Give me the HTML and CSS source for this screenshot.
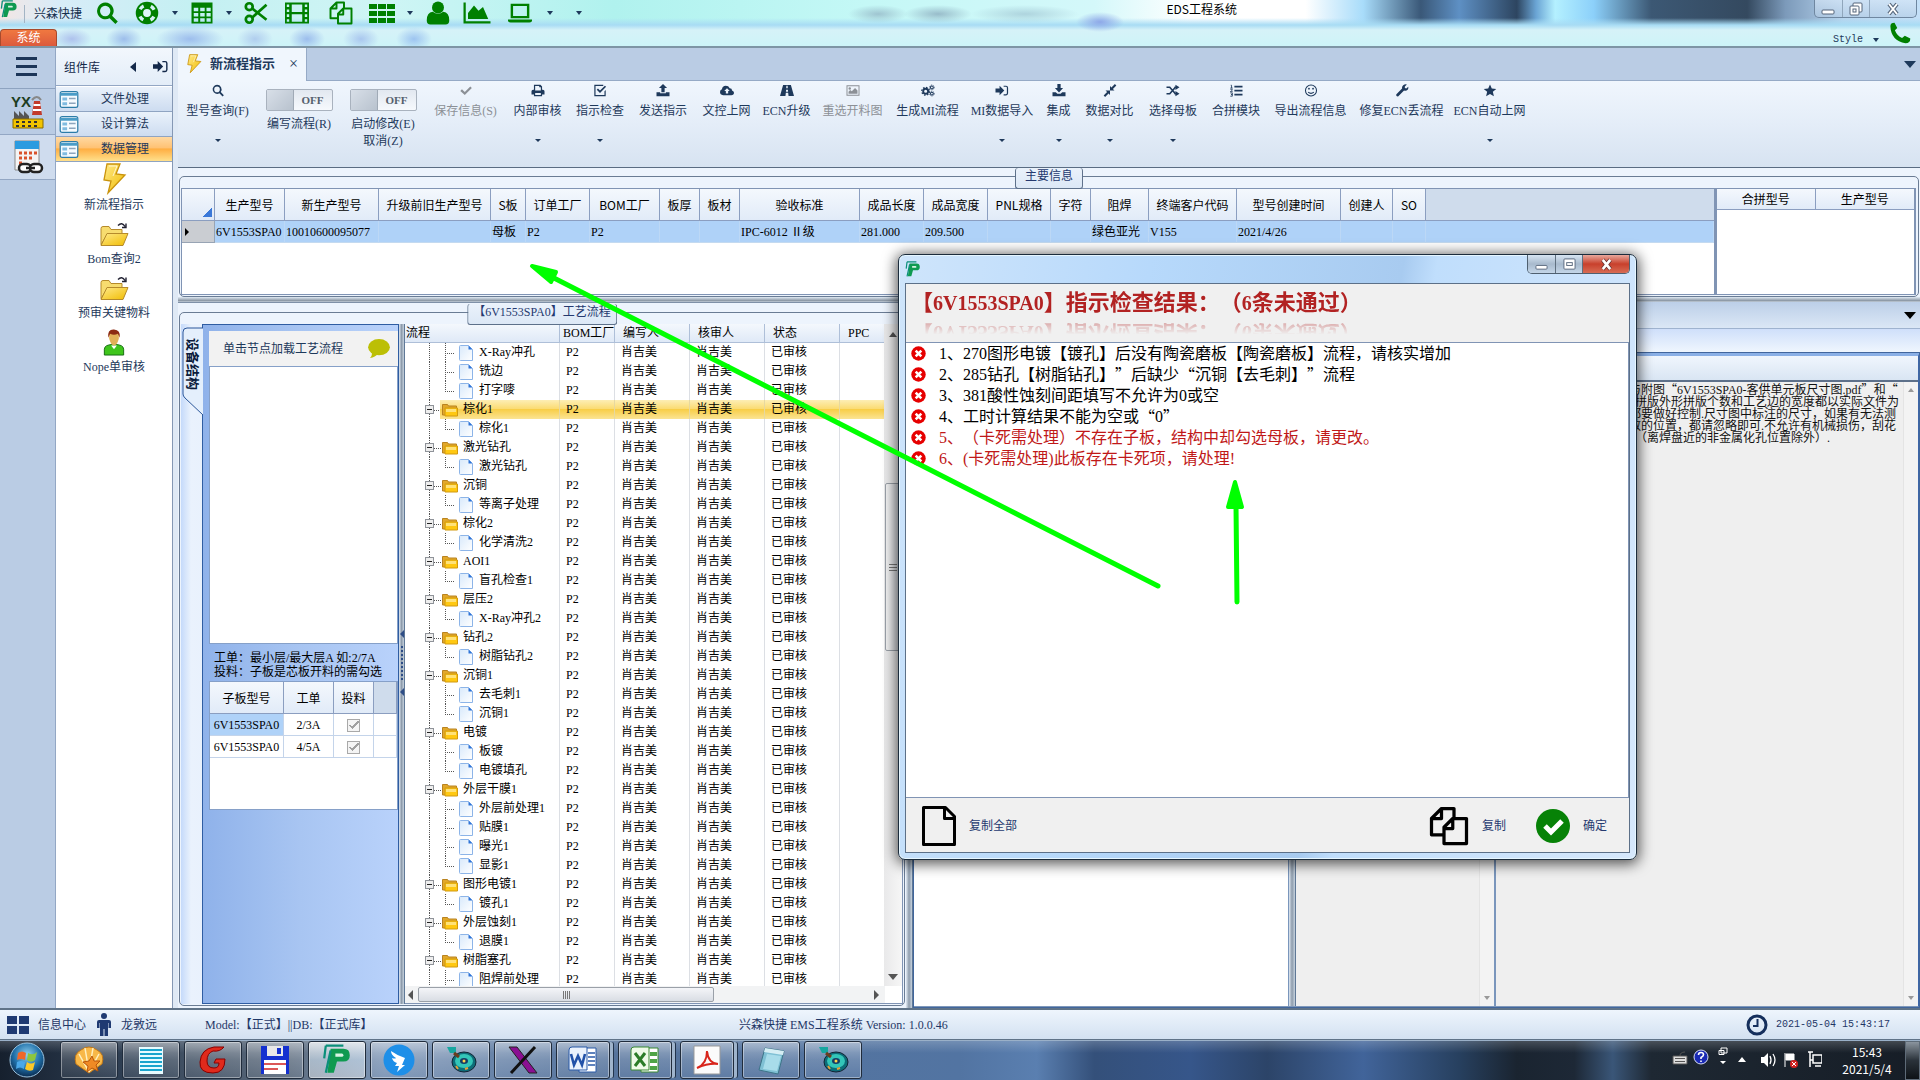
FILE: index.html
```html
<!DOCTYPE html>
<html lang="zh-CN">
<head>
<meta charset="utf-8">
<title>EDS工程系统</title>
<link rel="stylesheet" href="styles.css">
</head>
<body>
<svg class="defs" width="0" height="0" aria-hidden="true">
  <defs>
    <linearGradient id="gold" x1="0" y1="0" x2="1" y2="1"><stop offset="0" stop-color="#ffe98a"/><stop offset="1" stop-color="#f0bc00"/></linearGradient>
    <linearGradient id="pagefill" x1="0" y1="0" x2="1" y2="1"><stop offset="0" stop-color="#d8e9fb"/><stop offset="1" stop-color="#fff"/></linearGradient>
    <radialGradient id="orb" cx=".5" cy=".35" r=".65"><stop offset="0" stop-color="#8fd0f0"/><stop offset=".6" stop-color="#1f6fa8"/><stop offset="1" stop-color="#0a2c50"/></radialGradient>
  </defs>
  <symbol id="logo" viewBox="0 0 18 20"><path d="M5 3h8q4 0 4 4t-4 4H9l-2 7H3z" fill="#0f9a50"/><path d="M8 6h4q1 0 1 1t-1 1H8z" fill="#d8f4e4"/><path d="M2 1h11M2 1L1 9M5 4L2 18" stroke="#0b8f7a" stroke-width="1.4" fill="none"/></symbol>
  <symbol id="search" viewBox="0 0 16 16"><path d="M6.8 1a5.6 5.6 0 0 1 4.6 8.8l3.8 3.9-1.6 1.6-3.9-3.8A5.6 5.6 0 1 1 6.800 1zm0 2.200a3.400 3.400 0 1 0 0 6.900 3.400 3.400 0 0 0 0-6.900z"/></symbol>
  <symbol id="buoy" viewBox="0 0 16 16"><circle cx="8" cy="8" r="7.500"/><circle cx="8" cy="8" r="5.200" fill="none" stroke="#d6f2f6" stroke-width="2.200" stroke-dasharray="3.200 4.970" stroke-dashoffset="-2.500"/><circle cx="8" cy="8" r="2.600" fill="#dff6fa"/></symbol>
  <symbol id="grid" viewBox="0 0 16 16"><path fill-rule="evenodd" d="M1 1h14v14H1zM2.500 4.500v2.300h3V4.500zm4.300 0v2.300h3V4.500zm4.200 0v2.300h2.800V4.500zM2.500 8v2.300h3V8zm4.300 0v2.300h3V8zM11 8v2.300h2.800V8zm-8.500 3.500v2.300h3v-2.300zm4.300 0v2.300h3v-2.300zm4.200 0v2.300h2.800v-2.300z"/></symbol>
  <symbol id="cut" viewBox="0 0 16 16"><g fill="none" stroke="currentColor" stroke-width="1.800"><circle cx="3.500" cy="3.800" r="2.300"/><circle cx="3.500" cy="12.200" r="2.300"/><path d="M5.500 5l9.500 7.500M5.500 11L15 2.500"/></g></symbol>
  <symbol id="film" viewBox="0 0 16 16"><path fill-rule="evenodd" d="M0 1h16v14H0zM1.200 2.300v1.700h1.600V2.300zm0 3.300v1.700h1.600V5.600zm0 3.300v1.700h1.600V8.900zm0 3.200v1.700h1.600v-1.700zM4.500 2.300v5h7v-5zm0 6.500v5h7v-5zM13.200 2.300v1.700h1.600V2.300zm0 3.300v1.700h1.600V5.600zm0 3.300v1.700h1.600V8.900zm0 3.200v1.700h1.600v-1.700z"/></symbol>
  <symbol id="copy" viewBox="0 0 32 32"><g fill="none" stroke="currentColor" stroke-width="2.600" stroke-linejoin="round"><path d="M12 23H2V10l8-8h10v8M10 2v8H2"/><path d="M12 17l7-7h11v20H12zM19 10v8h-7"/></g></symbol>
  <symbol id="th" viewBox="0 0 26 19"><path d="M0 0h8v5H0zM9 0h8v5H9zM18 0h8v5h-8zM0 7h8v5H0zM9 7h8v5H9zM18 7h8v5h-8zM0 14h8v5H0zM9 14h8v5H9zM18 14h8v5h-8z"/></symbol>
  <symbol id="user" viewBox="0 0 16 16"><circle cx="8" cy="4.300" r="4"/><path d="M.500 13q0-5.500 4-5.800 3.500 2.500 7 0 4 .3 4 5.800 0 2.600-2.500 2.600H3Q.500 15.600.500 13z"/></symbol>
  <symbol id="chart" viewBox="0 0 18 16"><path d="M0 1h1.500v12.500H18V15H0zM3 12V8l4-5 3 3.500L13 4l3.500 8z"/></symbol>
  <symbol id="laptop" viewBox="0 0 18 16"><path fill-rule="evenodd" d="M2 1h14v11H2zm1.800 1.800v7.400h10.400V2.800zM0 12.800h18v1.400q-1 1-2 1H2q-1 0-2-1z"/></symbol>
  <symbol id="phone" viewBox="0 0 16 16"><path d="M1 3Q1 .5 4 .5l2 3.800L4.300 6q1.500 4 5.200 5.700l2-1.700 4 2q0 3.500-3.500 3.500Q1.500 13.500 1 3z"/></symbol>
  <symbol id="signin" viewBox="0 0 16 16"><path d="M0 5.500h5V2.200L10.800 8 5 13.800v-3.300H0zM10 2h3q2.500 0 2.500 2.500v7Q15.500 14 13 14h-3v-1.500h3q1 0 1-1v-7q0-1-1-1h-3z"/></symbol>
  <symbol id="bolt" viewBox="0 0 24 32"><path d="M5 1h13l-4 10 9 1L6 30l3-12-7-1z" fill="url(#gold)" stroke="#c9930c" stroke-width="1.300"/><path d="M7 3h8l-4 10" fill="none" stroke="#fff" opacity=".7"/></symbol>
  <symbol id="openfolder" viewBox="0 0 30 26"><path d="M2 23V7q0-2 2-2h6l2 3h11v4H9z" fill="#f7dc6f" stroke="#b58a2b"/><path d="M2 24L8 12h21l-5 12z" fill="url(#gold)" stroke="#b58a2b"/><path d="M19 4q4-4 7 1m1-3v4h-4" fill="none" stroke="#223" stroke-width="1.400"/></symbol>
  <symbol id="person" viewBox="0 0 22 28"><path d="M1 27v-6q0-5 10-5t10 5v6z" fill="#3fc51c" stroke="#146b10"/><path d="M8 17l3 4 3-4z" fill="#fff"/><path d="M6 4q5-5 10 0v6q-2 7-5 7t-5-7z" fill="#e1b158"/><path d="M5 9Q4 0 11 .500T17 9l-2-4Q11 7 7 5z" fill="#8c2a12"/></symbol>
  <symbol id="form" viewBox="0 0 20 18"><rect x=".700" y=".700" width="18.600" height="16.600" rx="2" fill="#f5fbff" stroke="#2c7ca8" stroke-width="1.300"/><path d="M1 2h18v3H1z" fill="#4a9cc7"/><path d="M3 7h5v3H3zM3 12h5v3H3z" fill="#7fbbe0"/><path d="M10 8h7M10 13h7" stroke="#8da5bd" stroke-width="1.500"/></symbol>
  <symbol id="check" viewBox="0 0 16 16"><path d="M1 8.500L3 6.500l3.500 3.300L13.300 3l1.900 2-8.700 8.600z"/></symbol>
  <symbol id="print" viewBox="0 0 16 16"><path fill-rule="evenodd" d="M3 1h8l2 2v4h1q2 0 2 2v4h-3v2H3v-2H0V9q0-2 2-2h1zm1.500 1.500V8h7V4H9.500V2.500zM4.500 11v2.500h7V11z"/></symbol>
  <symbol id="checkbox" viewBox="0 0 16 16"><path fill-rule="evenodd" d="M2 1h10v1.500H2.500v11h11V9L15 7.500V15H1V1zM4 7l1.500-1.500L8 8l6-6 1.500 1.500L8 11z"/></symbol>
  <symbol id="upload" viewBox="0 0 16 16"><path d="M8 0l5 5H10v5H6V5H3zM0 10h4.500v1.500h7V10H16v5H0z"/></symbol>
  <symbol id="cloud" viewBox="0 0 18 16"><path fill-rule="evenodd" d="M4 14Q0 13.500 0 10q0-2.500 2.500-3.500Q3 2 7.500 2 11 2 12.500 5q3 0 3 3 2.500 1 2.500 3 0 3-3.500 3zM9 5L5.500 8.500h2V12h3V8.500h2z"/></symbol>
  <symbol id="road" viewBox="0 0 18 16"><path fill-rule="evenodd" d="M4 1h10l4 14h-7l-.5-4h-3L7 15H0zm4.200 1L8 5h2l-.2-3zM7.800 7l-.2 2.500h2.800L10.200 7z"/></symbol>
  <symbol id="image" viewBox="0 0 16 16"><path fill-rule="evenodd" d="M0 1.500h16v13H0zM1.200 2.800v10.400h13.600V2.800z"/><circle cx="4" cy="5.500" r="1.500"/><path d="M2.500 12V9.500l2-2 2 1.500L10.500 5l3 3v4z"/></symbol>
  <symbol id="cogs" viewBox="0 0 18 16"><g fill="none" stroke="currentColor"><circle cx="6" cy="9" r="3.200" stroke-width="2.400"/><circle cx="6" cy="9" r="5" stroke-width="1.600" stroke-dasharray="2 1.900"/><circle cx="14" cy="4" r="1.800" stroke-width="1.300"/><circle cx="14" cy="4" r="3" stroke-dasharray="1.300 1"/><circle cx="14" cy="12" r="1.800" stroke-width="1.300"/><circle cx="14" cy="12" r="3" stroke-dasharray="1.300 1"/></g></symbol>
  <symbol id="download" viewBox="0 0 16 16"><path d="M6 0h4v5h3l-5 5.500L3 5h3zM0 10h4l2 2h4l2-2h4v5H0z"/></symbol>
  <symbol id="compress" viewBox="0 0 16 16"><path d="M8 8V2.500l1.800 1.800L14 0l1.800 1.800-4.200 4.300L13.500 8zM8 8v5.500l-1.800-1.800L2 16 .200 14.200l4.200-4.300L2.500 8z"/></symbol>
  <symbol id="shuffle" viewBox="0 0 16 16"><path d="M0 4h4l7 8M0 12h4l7-8" fill="none" stroke="currentColor" stroke-width="2"/><path d="M11 1l5 3-5 3.500zM11 8.500l5 3.500-5 3z"/><path d="M10 4h2M10 12h2" stroke="currentColor" stroke-width="2"/></symbol>
  <symbol id="listol" viewBox="0 0 16 16"><path d="M6 2h10v2.200H6zM6 7h10v2.200H6zM6 12h10v2.200H6z"/><path d="M1.500 1.500h1V5M1 5h3M1 6.500h2.300v1.300L1 9.500h3M1 11h2.500v2H2h1.500v2H1" fill="none" stroke="currentColor"/></symbol>
  <symbol id="smile" viewBox="0 0 16 16"><g fill="none" stroke="currentColor" stroke-width="1.300"><circle cx="8" cy="8" r="6.800"/><path d="M4.500 10q3.500 3 7 0"/></g><circle cx="5.500" cy="5.800" r="1.100"/><circle cx="10.500" cy="5.800" r="1.100"/></symbol>
  <symbol id="wrench" viewBox="0 0 16 16"><path d="M11 0.500q1.500-.5 3 0L11.500 3v1.800l1.800.7 2.400-2.200q.6 2-.7 3.700-2 2-4.500 1l-7 7q-1 .7-2.200-.2-.9-1.200-.2-2.200l7-7Q7.500 2 11 .500z"/></symbol>
  <symbol id="star" viewBox="0 0 16 16"><path d="M8 .500l2.200 5 5.500.500-4.200 3.600 1.300 5.400L8 12.200 3.200 15l1.300-5.400L.300 6l5.500-.5z"/></symbol>
  <symbol id="treefolder" viewBox="0 0 16 14"><path d="M.500 12V1.500h5l1 1.500h8v9z" fill="#e2a82a" stroke="#b98320"/><path d="M3 13V5h12.500v8z" fill="#ffc811" stroke="#d29a10"/><path d="M4 6h10v3H4z" fill="#ffe27a"/></symbol>
  <symbol id="page" viewBox="0 0 14 16"><path d="M1.500.500h8l4 4v11h-12q-1 0-1-1v-13q0-1 1-1z" fill="url(#pagefill)" stroke="#8cb4e8"/><path d="M9.500.500v4h4z" fill="#2f74d8"/></symbol>
  <symbol id="error" viewBox="0 0 16 16"><circle cx="8" cy="8" r="7.700" fill="#e60000"/><path d="M5 5l6 6M11 5l-6 6" stroke="#fff" stroke-width="2.800"/></symbol>
  <symbol id="bigpage" viewBox="0 0 34 40"><path d="M1.500 1.500h22l9 9v28h-31zM22.500 2v10.500h10" fill="none" stroke="currentColor" stroke-width="3" stroke-linejoin="round"/></symbol>
  <symbol id="ok" viewBox="0 0 34 34"><circle cx="17" cy="17" r="17" fill="#078207"/><path d="M9 17l6 6 11-11" fill="none" stroke="#fff" stroke-width="5"/></symbol>
</svg>

<header class="titlebar">
  <div class="title-row">
    <svg class="app-logo"><use href="#logo"/></svg>
    <span class="brand">兴森快捷</span>
    <div class="quick">
      <button aria-label="查询"><svg class="q"><use href="#search"/></svg></button>
      <button aria-label="帮助"><svg class="q wide"><use href="#buoy"/></svg></button>
      <button aria-label="更多帮助"><i class="caret"></i></button>
      <button aria-label="表格"><svg class="q"><use href="#grid"/></svg></button>
      <button aria-label="更多表格"><i class="caret"></i></button>
      <button aria-label="剪切"><svg class="q"><use href="#cut"/></svg></button>
      <button aria-label="胶片"><svg class="q wide"><use href="#film"/></svg></button>
      <button aria-label="复制"><svg class="q wide"><use href="#copy"/></svg></button>
      <button aria-label="列表"><svg class="q flat"><use href="#th"/></svg></button>
      <button aria-label="更多列表"><i class="caret"></i></button>
      <button aria-label="用户"><svg class="q"><use href="#user"/></svg></button>
      <button aria-label="图表"><svg class="q wide"><use href="#chart"/></svg></button>
      <button aria-label="电脑"><svg class="q"><use href="#laptop"/></svg></button>
      <button aria-label="更多电脑"><i class="caret"></i></button>
      <button aria-label="自定义"><i class="caret more"></i></button>
    </div>
    <h1>EDS工程系统</h1>
    <div class="winctl">
      <button aria-label="最小化"><svg viewBox="0 0 16 14"><rect x="2" y="8" width="12" height="4" rx="1" fill="#fff" stroke="#55657a"/></svg></button>
      <button aria-label="还原"><svg viewBox="0 0 16 14"><rect x="5" y="1" width="9" height="9" rx="1" fill="#fff" stroke="#55657a"/><rect x="2" y="4" width="9" height="9" rx="1" fill="#fff" stroke="#55657a"/><rect x="5" y="7" width="3" height="3" fill="none" stroke="#55657a"/></svg></button>
      <button aria-label="关闭"><svg viewBox="0 0 16 14"><path d="M4 2l8 10M12 2L4 12" stroke="#55657a" stroke-width="4"/><path d="M4 2l8 10M12 2L4 12" stroke="#fff" stroke-width="2"/></svg></button>
    </div>
  </div>
  <div class="ribbon-row">
    <button class="system">系统</button>
    <button class="style-btn">Style <i class="caret"></i></button>
    <svg class="phone"><use href="#phone"/></svg>
  </div>
</header>

<div class="workspace">
  <nav class="rail">
    <button class="burger" aria-label="菜单"><i></i><i></i><i></i></button>
    <button class="rail-btn" aria-label="YX">
      <svg viewBox="0 0 32 34"><path d="M20 20l2-14h6l2 14z" fill="#c23b2c"/><path d="M21.500 10h7M21 15h8.500" stroke="#fff" stroke-width="2"/><path d="M20 5q5-6 9 0" fill="none" stroke="#888" stroke-width="2"/><path d="M2 32V16l5 5v-5l5 5v-5l5 5v11z" fill="#555"/><path d="M1 24h30v9H1z" fill="#f2c400" stroke="#8a6c00"/><path d="M4 27h3M10 27h3M16 27h3M22 27h3M4 31h3M10 31h3M16 31h3M22 31h3" stroke="#333" stroke-width="2"/></svg>
      <span>YX</span>
    </button>
    <button class="rail-btn picked" aria-label="计算">
      <svg viewBox="0 0 32 34"><path d="M3 1h24v29H3z" fill="#f4f4f4" stroke="#888"/><path d="M3 1h24v8H3z" fill="#2b9be0"/><path d="M7 13h3M12 13h3M17 13h3M22 13h3M7 18h3M12 18h3M17 18h3M7 23h3" stroke="#d9532c" stroke-width="3"/><g fill="#fff" stroke="#222" stroke-width="2.500"><rect x="7" y="24" width="12" height="8" rx="4"/><rect x="18" y="24" width="12" height="8" rx="4"/><path d="M14 28h9"/></g></svg>
    </button>
  </nav>

  <aside class="library">
    <header><h2>组件库</h2><i class="tri-left"></i><svg><use href="#signin"/></svg></header>
    <button class="cat"><svg><use href="#form"/></svg><span>文件处理</span></button>
    <button class="cat"><svg><use href="#form"/></svg><span>设计算法</span></button>
    <button class="cat on"><svg><use href="#form"/></svg><span>数据管理</span></button>
    <ul>
      <li><a href="#"><svg><use href="#bolt"/></svg>新流程指示</a></li>
      <li><a href="#"><svg><use href="#openfolder"/></svg>Bom查询2</a></li>
      <li><a href="#"><svg><use href="#openfolder"/></svg>预审关键物料</a></li>
      <li><a href="#"><svg><use href="#person"/></svg>Nope单审核</a></li>
    </ul>
  </aside>

  <main class="main">
    <div class="tabs">
      <div class="tab"><svg><use href="#bolt"/></svg><span>新流程指示</span><button aria-label="关闭标签">×</button></div>
      <i class="tri-down"></i>
    </div>

    <div class="toolbar">
      <button class="tool drop"><svg><use href="#search"/></svg><span>型号查询(F)</span></button>
      <label class="tool toggle"><span class="switch"><input type="checkbox"><b>OFF</b></span><span>编写流程(R)</span></label>
      <label class="tool toggle"><span class="switch"><input type="checkbox"><b>OFF</b></span><span>启动修改(E)<br>取消(Z)</span></label>
      <button class="tool" disabled><svg><use href="#check"/></svg><span>保存信息(S)</span></button>
      <button class="tool drop"><svg><use href="#print"/></svg><span>内部审核</span></button>
      <button class="tool drop"><svg><use href="#checkbox"/></svg><span>指示检查</span></button>
      <button class="tool"><svg><use href="#upload"/></svg><span>发送指示</span></button>
      <button class="tool"><svg><use href="#cloud"/></svg><span>文控上网</span></button>
      <button class="tool"><svg><use href="#road"/></svg><span>ECN升级</span></button>
      <button class="tool" disabled><svg><use href="#image"/></svg><span>重选开料图</span></button>
      <button class="tool"><svg><use href="#cogs"/></svg><span>生成MI流程</span></button>
      <button class="tool drop"><svg><use href="#signin"/></svg><span>MI数据导入</span></button>
      <button class="tool drop"><svg><use href="#download"/></svg><span>集成</span></button>
      <button class="tool drop"><svg><use href="#compress"/></svg><span>数据对比</span></button>
      <button class="tool drop"><svg><use href="#shuffle"/></svg><span>选择母板</span></button>
      <button class="tool"><svg><use href="#listol"/></svg><span>合拼模块</span></button>
      <button class="tool"><svg><use href="#smile"/></svg><span>导出流程信息</span></button>
      <button class="tool"><svg><use href="#wrench"/></svg><span>修复ECN丢流程</span></button>
      <button class="tool drop"><svg><use href="#star"/></svg><span>ECN自动上网</span></button>
    </div>

    <section class="info">
      <div class="group">
        <h3 class="caption">主要信息</h3>
        <div class="sheet wide-sheet">
          <table class="data">
            <colgroup><col style="width:33px"><col style="width:70px"><col style="width:94px"><col style="width:112px"><col style="width:35px"><col style="width:64px"><col style="width:70px"><col style="width:40px"><col style="width:40px"><col style="width:120px"><col style="width:64px"><col style="width:64px"><col style="width:63px"><col style="width:40px"><col style="width:58px"><col style="width:88px"><col style="width:104px"><col style="width:52px"><col style="width:33px"><col></colgroup>
            <thead><tr><th class="corner"></th><th>生产型号</th><th>新生产型号</th><th>升级前旧生产型号</th><th>S板</th><th>订单工厂</th><th>BOM工厂</th><th>板厚</th><th>板材</th><th>验收标准</th><th>成品长度</th><th>成品宽度</th><th>PNL规格</th><th>字符</th><th>阻焊</th><th>终端客户代码</th><th>型号创建时间</th><th>创建人</th><th>SO</th><th class="rest"></th></tr></thead>
            <tbody><tr><td class="mark"><i></i></td><td>6V1553SPA0</td><td>10010600095077</td><td></td><td>母板</td><td>P2</td><td>P2</td><td></td><td></td><td>IPC-6012 Ⅱ级</td><td>281.000</td><td>209.500</td><td></td><td></td><td>绿色亚光</td><td>V155</td><td>2021/4/26</td><td></td><td></td><td></td></tr></tbody>
          </table>
        </div>
        <div class="sheet pair">
          <table class="data short"><thead><tr><th>合拼型号</th><th>生产型号</th></tr></thead></table>
        </div>
      </div>
    </section>

    <div class="hsplit"></div>

    <div class="lower">
      <section class="process">
        <div class="group">
          <h3 class="caption">【6V1553SPA0】工艺流程</h3>
          <div class="device">
            <button class="vtab"><svg viewBox="0 0 22 92" preserveAspectRatio="none"><path d="M22 4H6q-4 0-4 4v62q0 2 2 4l18 17" fill="#e4effc" stroke="#2b579a"/></svg><span>设备结构</span></button>
            <div class="device-body">
              <div class="device-head"><span>单击节点加载工艺流程</span><svg viewBox="0 0 24 22"><ellipse cx="12" cy="9" rx="12" ry="9" fill="#bcbf05"/><path d="M4 14q1 4-2 7 6-1 9-5z" fill="#bcbf05"/></svg></div>
              <div class="blank"></div>
              <p>工单：最小层/最大层A 如:2/7A<br>投料：子板是芯板开料的需勾选</p>
              <div class="subsheet">
                <table>
                  <thead><tr><th>子板型号</th><th>工单</th><th>投料</th><th class="rest"></th></tr></thead>
                  <tbody>
                    <tr><td class="cur">6V1553SPA0</td><td>2/3A</td><td><input type="checkbox" checked disabled aria-label="投料"></td><td></td></tr>
                    <tr><td>6V1553SPA0</td><td>4/5A</td><td><input type="checkbox" checked disabled aria-label="投料"></td><td></td></tr>
                  </tbody>
                </table>
              </div>
            </div>
          </div>
          <div class="vsplit grip"><i></i><b></b><i></i></div>
          <div class="tree">
            <div class="tree-view">
              <div class="tree-scroll">
                <table>
                  <colgroup><col class="c-name"><col class="c-bom"><col class="c-who"><col class="c-who"><col class="c-who"><col></colgroup>
                  <thead><tr><th>流程</th><th>BOM工厂</th><th>编写人</th><th>核审人</th><th>状态</th><th>PPC</th></tr></thead>
                  <tbody id="rows"></tbody>
                </table>
              </div>
              <div class="vbar"><i class="up"></i><b></b><i class="down"></i></div>
            </div>
            <div class="hbar"><i class="left"></i><b></b><i class="right"></i></div>
          </div>
        </div>
      </section>
      <div class="vsplit"></div>
      <section class="detail">
        <div class="strip"><i class="tri-down black"></i></div>
        <div class="strip pale"></div>
        <div class="panes">
          <div class="pane first"></div>
          <div class="vsplit"></div>
          <div class="pane second"><div class="pane-head"></div><div class="pane-body"><div class="note"></div><div class="thin"><i class="up"></i><i class="down"></i></div></div></div>
          <div class="pane third"><div class="pane-head"></div><div class="pane-body"><div class="note">与附图<span class="cjk">“</span>6V1553SPA0-客供单元板尺寸图.pdf<span class="cjk">”</span>和<span class="cjk">“</span>
  拼版外形拼版个数和工艺边的宽度都以实际文件为
都要做好控制.尺寸图中标注的尺寸，如果有无法测
数的位置，都请忽略即可.不允许有机械损伤，刮花
  （离焊盘近的非金属化孔位置除外）.</div><div class="thin"><i class="up"></i><i class="down"></i></div></div></div>
        </div>
      </section>
    </div>
  </main>
</div>

<footer class="status">
  <svg class="cells" viewBox="0 0 22 20"><path d="M0 1h10v8H0zM12 1h10v8H12zM0 11h10v8H0zM12 11h10v8H12z" fill="#1f3a72"/></svg>
  <span class="s-info">信息中心</span>
  <svg class="man" viewBox="0 0 14 24"><circle cx="7" cy="3" r="3" fill="#1f3a72"/><path d="M2 7h10q2 0 2 2v6h-2.500V10H11v13H7.500v-7h-1v7H3V10h-.500v5H0V9q0-2 2-2z" fill="#1f3a72"/></svg>
  <span class="s-user">龙敦远</span>
  <span class="s-model">Model:【正式】||DB:【正式库】</span>
  <span class="s-version">兴森快捷 EMS工程系统 Version: 1.0.0.46</span>
  <svg class="clock" viewBox="0 0 22 22"><circle cx="11" cy="11" r="9" fill="none" stroke="#152f5c" stroke-width="3"/><path d="M11.500 5v7H7" fill="none" stroke="#152f5c" stroke-width="2"/></svg>
  <time>2021-05-04 15:43:17</time>
</footer>

<nav class="taskbar">
  <button class="start" aria-label="开始"><svg viewBox="0 0 38 38"><circle cx="19" cy="19" r="17" fill="url(#orb)" stroke="#9cc4e0"/><path d="M10 12q4-3 8 0l-1 7q-4-2-8 0z" fill="#f0672a"/><path d="M20 12q5 3 9-1l-2 8q-4 3-8 0z" fill="#8cc63e"/><path d="M9 21q4-2 8 0l-1 7q-4-3-8 0z" fill="#4aa8e8"/><path d="M19 21q4 3 8 0l-2 8q-4 2-8-1z" fill="#fcc827"/></svg></button>
  <button class="task" aria-label="贝壳"><svg viewBox="0 0 32 32"><path d="M16 29L3 20Q0 10 8 6q8-6 16 0 8 4 5 14z" fill="#f8b848" stroke="#c47a18"/><path d="M16 28L6 10M16 28L12 4M16 28L20 4M16 28l10-18" stroke="#fff0c0" stroke-width="1.500"/><path d="M19 12l2 5 6 0-4 4 2 6-6-3-5 4 1-6-5-4 6-1z" fill="#f08a24" stroke="#b8560c"/></svg></button>
  <button class="task" aria-label="文档"><svg viewBox="0 0 32 32"><path d="M4 3h24v27H4z" fill="#e8fbff"/><path d="M5 6h22M5 10h22M5 14h22M5 18h22M5 22h22M5 26h22" stroke="#1aa4cc" stroke-width="2.200"/></svg></button>
  <button class="task" aria-label="G"><svg viewBox="0 0 32 32"><path d="M27 3q-4 5-11 4-6 2-6 10 0 7 7 7 5 0 5-5h-5l2-4h9q0 14-12 14Q2 29 3 18 4 5 17 3z" fill="#e02a1c" stroke="#800"/></svg></button>
  <button class="task" aria-label="磁盘"><svg viewBox="0 0 32 32"><path d="M2 2h28v28H2z" fill="#1430d0"/><path d="M8 2h16v10H8z" fill="#e8e8e8"/><path d="M18 4h4v6h-4z" fill="#1430d0"/><path d="M5 16h22v14H5z" fill="#fff"/><path d="M5 20h22M5 25h14" stroke="#d02020" stroke-width="1.500"/></svg></button>
  <button class="task active" aria-label="工程系统"><svg viewBox="0 0 18 20"><use href="#logo"/></svg></button>
  <button class="task" aria-label="钉钉"><svg viewBox="0 0 32 32"><circle cx="16" cy="16" r="15.500" fill="#1e8fe8"/><path d="M8 7q7 5 14 7l-3 7h3l-8 7 2-6h-4l2-3q-4-1-5-5 3 1 4 0-5-3-5-7z" fill="#fff"/></svg></button>
  <button class="task" aria-label="工具一"><svg viewBox="0 0 32 32"><use href="#disc"/></svg></button>
  <button class="task" aria-label="X"><svg viewBox="0 0 32 32"><path d="M2 3h8l20 26h-8z" fill="#8a0f92" stroke="#222"/><path d="M28 3L4 29" stroke="#111" stroke-width="3"/></svg></button>
  <button class="task stack" aria-label="Word"><svg viewBox="0 0 32 32"><path d="M12 4h17v24H12z" fill="#fff" stroke="#2a5aa8"/><path d="M21 9h7M21 13h7M21 17h7M21 21h7" stroke="#2a5aa8" stroke-width="1.500"/><path d="M2 6q0-3 3-3h15v23H2z" fill="#eaf2fc" stroke="#2a5aa8"/><path d="M4 10l3 11 4-9 4 9 3-11" fill="none" stroke="#2252a8" stroke-width="2.600"/></svg></button>
  <button class="task stack" aria-label="Excel"><svg viewBox="0 0 32 32"><path d="M12 4h17v24H12z" fill="#fff" stroke="#3a8a34"/><path d="M21 8h7v4h-7zM21 15h7v4h-7zM21 22h7v4h-7z" fill="#4ea445"/><path d="M2 6q0-3 3-3h15v23H2z" fill="#eefae8" stroke="#3a8a34"/><path d="M6 9l10 13M16 9L6 22" stroke="#2b7c28" stroke-width="3"/></svg></button>
  <button class="task stack" aria-label="PDF"><svg viewBox="0 0 32 32"><path d="M3 2h26v28H3z" fill="#fbfbfb" stroke="#999"/><path d="M6 24q10-4 10-17 1 12 11 13-10-1-21 4z" fill="none" stroke="#d8251c" stroke-width="2"/></svg></button>
  <button class="task" aria-label="便签"><svg viewBox="0 0 32 32"><path d="M10 4l19 3-6 23-19-4z" fill="#7fc0d4" stroke="#3c7488"/><path d="M10 4l19 3-1 4-19-3z" fill="#d6eef4"/><path d="M12 10l14 2-4 15-14-2z" fill="#a8dcea"/></svg></button>
  <button class="task" aria-label="工具二"><svg viewBox="0 0 32 32"><g id="disc"><ellipse cx="19" cy="18" rx="12" ry="10" fill="#0d6d78" stroke="#123"/><ellipse cx="19" cy="17" rx="9" ry="7" fill="#33c6b8"/><ellipse cx="19" cy="17" rx="4" ry="3" fill="#153d66"/><circle cx="19" cy="17" r="1.500" fill="#ffd34a"/><path d="M2 3h9v6H5z" fill="#17a6a0"/><path d="M9 9l5 4" stroke="#6a3d1d" stroke-width="3"/><path d="M11 22l2 3M20 25l3-1" stroke="#e8a038" stroke-width="2"/></g></svg></button>
  <div class="tray">
    <svg viewBox="0 0 150 24" class="tray-icons"><path d="M1 10h14v8H1z" fill="#ddd" stroke="#555"/><path d="M3 12.500h10M3 15.500h10M8 10q0-4 5-4" stroke="#555" fill="none"/><circle cx="29" cy="11" r="7" fill="#1a2ab4" stroke="#d8dcf4"/><path d="M26.500 9q0-2.500 2.500-2.500t2.500 2.200q0 1.500-2.500 2.800v1.500M29 14.500v1.500" fill="none" stroke="#fff" stroke-width="1.600"/><path d="M49 2h6v5h-6zM47 4.500h5v4h-5z" fill="none" stroke="#fff"/><path d="M48 15h6l-3 3zM66 16h8l-4-5z" fill="#fff"/><path d="M89 11h3l4-4v14l-4-4h-3z" fill="#fff"/><path d="M98 10q2 4 0 8M101 8q4 6 0 12" fill="none" stroke="#fff" stroke-width="1.300"/><path d="M113 7v14M114 8h8v6h-8z" fill="#fff" stroke="#fff"/><circle cx="122" cy="18" r="4" fill="#d02020"/><path d="M120 16l4 4M124 16l-4 4" stroke="#fff"/><path d="M141 9h9v8h-9zM143 20h6M138 6v8h3M136 6h5M138 14v7" fill="none" stroke="#fff" stroke-width="1.500"/></svg>
    <div class="time">15:43<br>2021/5/4</div>
    <button class="peek" aria-label="显示桌面"></button>
  </div>
</nav>

<div class="dialog" role="dialog" aria-labelledby="dlg-title">
  <div class="dlg-bar">
    <svg class="dlg-logo"><use href="#logo"/></svg>
    <div class="dlg-ctl">
      <button aria-label="最小化"><svg viewBox="0 0 16 14"><rect x="2" y="8" width="12" height="4" rx="1" fill="#fff" stroke="#55657a"/></svg></button>
      <button aria-label="最大化"><svg viewBox="0 0 16 14"><rect x="2" y="1" width="12" height="11" rx="1" fill="#fff" stroke="#55657a"/><rect x="5" y="5" width="6" height="3" fill="none" stroke="#55657a"/></svg></button>
      <button class="x" aria-label="关闭"><svg viewBox="0 0 16 14"><path d="M4 2l8 10M12 2L4 12" stroke="#6a3434" stroke-width="4.500"/><path d="M4 2l8 10M12 2L4 12" stroke="#fff" stroke-width="2.800"/></svg></button>
    </div>
  </div>
  <div class="dlg-client">
    <div class="dlg-head"><h2 id="dlg-title">【<span class="code">6V1553SPA0</span>】指示检查结果：（<span class="code">6</span>条未通过）</h2></div>
    <ul class="dlg-list">
      <li><svg><use href="#error"/></svg>1、270图形电镀【镀孔】后没有陶瓷磨板【陶瓷磨板】流程，请核实增加</li>
      <li><svg><use href="#error"/></svg>2、285钻孔【树脂钻孔】<span class="cjk">”</span>后缺少<span class="cjk">“</span>沉铜【去毛刺】<span class="cjk">”</span>流程</li>
      <li><svg><use href="#error"/></svg>3、381酸性蚀刻间距填写不允许为0或空</li>
      <li><svg><use href="#error"/></svg>4、工时计算结果不能为空或<span class="cjk">“</span>0<span class="cjk">”</span></li>
      <li class="fatal"><svg><use href="#error"/></svg>5、（卡死需处理）不存在子板，结构中却勾选母板，请更改。</li>
      <li class="fatal"><svg><use href="#error"/></svg>6、(卡死需处理)此板存在卡死项，请处理!</li>
    </ul>
    <div class="dlg-foot">
      <button><svg class="f-page"><use href="#bigpage"/></svg>复制全部</button>
      <button class="push"><svg class="f-copy"><use href="#copy"/></svg>复制</button>
      <button><svg class="f-ok"><use href="#ok"/></svg>确定</button>
    </div>
  </div>
</div>

<svg class="arrows" viewBox="0 0 1920 1080" width="1920" height="1080" aria-hidden="true">
  <g stroke="#00ff00" fill="#00ff00" stroke-linecap="round" stroke-linejoin="round">
    <path d="M552 277L1158 586" stroke-width="5"/><path d="M532 266l24 6-5 10z" stroke-width="4"/>
    <path d="M1236 505l1 97" stroke-width="5"/><path d="M1235 482l7 25h-14z" stroke-width="4"/>
  </g>
</svg>
<script src="app.js"></script>
</body>
</html>
```
FILE: styles.css
```css
* { box-sizing: border-box; }
:root {
  --ink: #1e395b;
  --line: #8ba0bc;
  --song: "Liberation Serif", "Noto Sans CJK SC", serif;
  --hei: "Noto Sans CJK SC", sans-serif;
}
body {
  margin: 0;
  height: 100vh;
  min-height: 900px;
  display: flex;
  flex-direction: column;
  position: relative;
  overflow: hidden;
  font: 12px/16px var(--song);
  text-spacing-trim: space-all;
  color: #000;
  background: #bacde6;
}
button { font: inherit; color: inherit; background: none; border: 0; padding: 0; margin: 0; }
h1, h2, h3, p, ul { margin: 0; padding: 0; font-weight: normal; list-style: none; }
h1, h2, h3 { font-size: 12px; }
svg { fill: currentColor; display: block; flex: none; }
.defs { position: absolute; }
table { border-collapse: separate; border-spacing: 0; table-layout: fixed; }
th { font-weight: normal; }
.cjk { font-family: var(--hei); }
.caret { display: inline-block; border: 3px solid transparent; border-top: 4px solid var(--ink); border-bottom: 0; }
.caret.more { box-shadow: 0 -6px 0 -3px var(--ink); }
.tri-down { border: 6px solid transparent; border-top: 7px solid var(--ink); border-bottom: 0; }
.tri-down.black { border-top-color: #000; }

/* title bar */
.titlebar {
  flex: none;
  height: 48px;
  border-bottom: 2px solid #7e95a5;
  display: flex;
  flex-direction: column;
  background:
    radial-gradient(ellipse 20px 11px at 72px 39px, #a5b5eacc, transparent),
    radial-gradient(ellipse 18px 12px at 124px 39px, #90b0e8cc, transparent),
    radial-gradient(ellipse 34px 13px at 190px 39px, #90b0eacc, transparent),
    radial-gradient(ellipse 18px 12px at 255px 39px, #a8c4eccc, transparent),
    radial-gradient(ellipse 18px 12px at 307px 39px, #8fb0eacc, transparent),
    radial-gradient(ellipse 18px 12px at 361px 39px, #a0bceccc, transparent),
    radial-gradient(ellipse 18px 12px at 414px 39px, #90b8eecc, transparent),
    radial-gradient(ellipse 30px 9px at 878px 14px, #7e98b088, transparent),
    radial-gradient(ellipse 34px 9px at 938px 14px, #7894ac99, transparent),
    radial-gradient(ellipse 54px 9px at 1025px 14px, #98bccc99, transparent),
    radial-gradient(ellipse 24px 10px at 1100px 22px, #8ea8e8, transparent),
    linear-gradient(transparent 18px, #a8dcf4 25px, #d6f2f8 30px, #cdf4f8 46px),
    linear-gradient(90deg, #f4e6e4 0, #d8ecf8 3%, #c4f0f2 10%, #cff5f5 20%, #b0f2ee 32%, #c4f8f6 45%, #d4f8fa 57%, #fff 62%, #fff 68%, #a8dcfa 71%, #3a5878 74%, #5e90c4 76%, #2d4560 79%, #6aa4d4 80%, #b4f0ff 81%, #8cd0fa 83%, #3c5874 86%, #34495f 91%, #7c9aba 93%, #b8d4ee 96%, #c4e0f8);
}
.title-row { height: 29px; display: flex; align-items: flex-start; }
.app-logo { width: 18px; height: 19px; }
.brand { width: 70px; height: 18px; margin: 5px 0 0; padding-left: 9px; border-left: 1px solid #a3b4c4; margin-left: 6px; line-height: 18px; color: #16304e; flex: none; margin-right: -7px; }
.quick { display: grid; height: 26px; align-items: center; grid-template-columns: 39px 41px 16px 37px 17px 38px 44px 43px 39px 18px 37px 41px 46px 13px 46px; }
.quick button { display: flex; justify-content: center; color: #008000; }
.q { width: 24px; height: 24px; }
.q.wide { width: 28px; }
.q.flat { width: 26px; height: 19px; }
.titlebar h1 { font-family: var(--hei); margin: 1px 577px 0 auto; white-space: nowrap; }
.winctl { display: flex; width: 103px; height: 18px; margin-right: 3px; border: 1px solid #6f87a0; border-top: 0; border-radius: 0 0 5px 5px; background: linear-gradient(#d6e6f6aa, #b4cce499); }
.winctl button { flex: 27; display: flex; justify-content: center; align-items: center; border-left: 1px solid #90a6bc; }
.winctl button:first-child { border: 0; }
.winctl button:last-child { flex: 46; }
.winctl svg { width: 16px; height: 14px; }
.ribbon-row { height: 17px; display: flex; padding-right: 9px; align-items: flex-end; }
.system { width: 57px; height: 17px; color: #fff; line-height: 16px; border: 1px solid #a84a2c; border-bottom: 0; border-radius: 4px 4px 0 0; background: linear-gradient(#f07840, #dc5a3c); }
.style-btn { margin-left: auto; margin-right: 10px; font: 10px/12px "Liberation Mono", monospace; color: var(--ink); display: flex; gap: 10px; align-items: center; }
.phone { width: 22px; height: 22px; margin-bottom: 2px; color: #008000; }

.workspace { flex: 1; min-height: 0; display: flex; background: #dfe9f5; }
/* rail */
.rail { width: 56px; flex: none; background: #bacce4; border-right: 1px solid #93a7c4; display: flex; flex-direction: column; }
.burger { height: 41px; padding: 9px 18px 0 16px; display: flex; flex-direction: column; gap: 4px; border-bottom: 1px solid #8ea3c0; }
.burger i { height: 3px; width: 21px; background: #1c3558; }
.burger i + i { margin-top: 1px; }
.rail-btn { height: 46px; display: flex; align-items: center; justify-content: center; border-bottom: 1px solid #93a7c4; position: relative; }
.rail-btn svg { width: 32px; height: 34px; }
.rail-btn span { position: absolute; left: 11px; top: 5px; font: bold 15px/16px "Liberation Sans", sans-serif; color: #1d3d22; }
.rail-btn.picked { height: 45px; background: #cfdcee; }

/* component library */
.library { width: 117px; flex: none; margin-right: 5px; background: #fff; border-right: 1px solid #8598b4; }
.library header { height: 38px; display: flex; align-items: center; padding: 0 4px 0 8px; background: linear-gradient(#f2f7fd, #e3edf8); border-bottom: 1px solid #93a7c4; margin-bottom: 1px; color: #14294a; }
.library h2 { font-family: var(--hei); flex: 1; }
.library header svg { width: 15px; height: 15px; margin-left: 17px; }
.tri-left { border: 5px solid transparent; border-right: 6px solid #14294a; border-left: 0; }
.cat { width: 100%; height: 25px; display: flex; align-items: center; padding-left: 3px; border-bottom: 1px solid #8fa4c2; background: linear-gradient(#eaf2fb, #cddcf0); color: var(--ink); }
.cat svg { width: 20px; height: 17px; }
.cat span { margin-left: 22px; }
.cat.on { background: linear-gradient(#ffd9a2, #ffc274 45%, #ffae42 50%, #ffe08c); }
.library li a { display: flex; flex-direction: column; align-items: center; height: 54px; color: var(--ink); text-decoration: none; }
.library li svg { width: 30px; height: 32px; margin-bottom: 2px; }
.library li { padding-top: 1px; height: 54px; }
.library li + li svg { height: 27px; margin: 4px 0 3px; }

/* main */
.main { flex: 1; min-width: 0; display: flex; flex-direction: column; }
.tabs { height: 33px; flex: none; display: flex; justify-content: space-between; align-items: center; background: #bacce4; border-bottom: 1px solid #96aac6; padding-right: 4px; }
.tab { width: 129px; height: 33px; display: flex; align-items: center; padding: 0 8px; background: #f0f6fd; border-right: 1px solid #96aac6; font-weight: bold; font-size: 13px; color: var(--ink); }
.tab svg { width: 16px; height: 20px; margin-right: 8px; }
.tab span { flex: 1; white-space: nowrap; }
.tab button { font-size: 16px; font-weight: normal; }
.toolbar { height: 86px; flex: none; display: grid; grid-template-columns: 79px 84px 84px 81px 63px 62px 64px 63px 57px 75px 75px 74px 39px 63px 64px 62px 87px 95px 81px; background: linear-gradient(#f0f6fd, #e4edf8 50%, #d7e3f1); }
.tool { display: flex; flex-direction: column; align-items: center; justify-content: flex-start; padding-top: 3px; color: var(--ink); white-space: nowrap; text-align: center; }
.tool svg { width: 14px; height: 13px; margin-bottom: 6px; }
.tool:disabled { color: #8c9096; }
.tool.drop::after { content: ""; border: 3px solid transparent; border-top: 3px solid var(--ink); border-bottom: 0; margin-top: 20px; }
.tool.toggle { padding-top: 8px; }
.tool.toggle > span:last-child { line-height: 17px; }
.switch { width: 67px; height: 22px; margin-bottom: 5px; display: flex; align-items: center; border: 1px solid #a9b2be; border-radius: 2px; background: linear-gradient(#e2e8f0, #f6f9fd); }
.switch input { appearance: none; margin: 0; width: 27px; height: 20px; border-right: 1px solid #a0aab6; background: linear-gradient(135deg, #d8dfe8, #b8c2ce); }
.switch b { flex: 1; font-size: 11px; color: #55606e; }

.caption { position: absolute; left: 50%; top: -9px; transform: translateX(-50%); height: 21px; padding: 0 9px; white-space: nowrap; border: 1px solid #5d708a; border-top: 0; border-radius: 3px; background: linear-gradient(#eaf2fb, #dce8f6); color: #25396f; line-height: 16px; z-index: 1; }
.process .caption { padding: 0 5px; }
.group { position: relative; display: flex; border: 1px solid #6a7c94; border-radius: 5px; background: #edf4fd; }
.info { height: 130px; flex: none; border-top: 1px solid #5a6c82; padding: 8px 1px 0; background: #edf4fd; display: flex; }
.info .group { flex: 1; padding: 11px 2px 1px 1px; }
.sheet { background: #fff; border: 1px solid #8094b4; }
.wide-sheet { flex: 1; min-width: 0; overflow: hidden; }
.pair { width: 201px; flex: none; border-left-width: 2px; border-right-width: 2px; }
.data { width: 100%; }
.data th { height: 32px; padding: 0; font-family: var(--hei); white-space: nowrap; border-right: 1px solid #8b9ec0; border-bottom: 1px solid #8b9ec0; background: linear-gradient(#f4f8fd, #e1ebf8); }
.data th:last-child { border-right: 0; }
.data.short th { height: 21px; }
.data th.rest, .subsheet th.rest { background: #cfdcec; }
.data th.corner { background: linear-gradient(135deg, transparent 50%, #3a78d8 50%) right 2px bottom 3px / 10px 10px no-repeat, linear-gradient(#f4f8fd, #dfe9f7); }
.data td { height: 22px; padding: 0 0 0 1px; white-space: nowrap; background: #afd2f8; border-right: 1px solid #bcd8f6; border-bottom: 1px solid #c4daf0; }
.data td.mark { background: #cacdd2; padding-left: 3px; border-color: #98a4b4; }
.mark i { display: block; width: 0; border: 4px solid transparent; border-left: 4px solid #000; border-right: 0; }
.hsplit { height: 5px; flex: none; background: linear-gradient(#dfe9f3, #8f9ba8 70%, #c4ceda); }

.lower { flex: 1; min-height: 0; display: flex; }
.process { width: 728px; flex: none; padding: 9px 1px 2px; border-top: 1px solid #7f91a8; background: #edf4fd; display: flex; }
.process .group { flex: 1; min-width: 0; padding: 11px 1px 1px 1px; }
.device { width: 218px; display: flex; background: linear-gradient(90deg, #c5dafa, #eaf2fd 10px, #d3e2fa); }
.vtab { width: 21px; flex: none; align-self: flex-start; height: 92px; position: relative; }
.vtab svg { width: 22px; height: 92px; position: absolute; left: 0; top: 0; }
.vtab span { position: absolute; left: 3px; top: 14px; writing-mode: vertical-rl; text-orientation: sideways; font-weight: bold; font-size: 13px; line-height: 16px; white-space: nowrap; color: #0c1c3c; }
.device-body { flex: 1; min-width: 0; border: 1px solid #2f5da2; padding: 6px 0 0 6px; background: linear-gradient(90deg, #8fb2ea, #a8c5f2 50%, #b9d2fb); }
.device-head { height: 35px; display: flex; align-items: center; padding: 0 7px 0 14px; background: #f2f2f2; color: var(--ink); }
.device-head span { flex: 1; }
.device-head svg { width: 24px; height: 20px; }
.blank { height: 278px; background: #fff; border: 1px solid #86a0c8; }
.device p { padding: 7px 0 0 5px; line-height: 14px; height: 37px; white-space: nowrap; }
.subsheet { height: 129px; background: #fff; border: 1px solid #86a0c8; }
.subsheet table { width: 100%; }
.subsheet th { height: 32px; padding: 0; font-family: var(--hei); background: linear-gradient(#f4f8fd, #e1ebf8); border-right: 1px solid #8b9ec0; border-bottom: 1px solid #8b9ec0; }
.subsheet th:nth-child(1) { width: 74px; }
.subsheet th:nth-child(2) { width: 50px; }
.subsheet th:nth-child(3) { width: 40px; }
.subsheet td { height: 22px; padding: 0; text-align: center; border-right: 1px solid #c4d4ea; border-bottom: 1px solid #c4d4ea; }
.subsheet td.cur { background: #afd2f8; }
.subsheet input { appearance: none; width: 13px; height: 13px; margin: 0; vertical-align: middle; border: 1px solid #a9a9a9; background: linear-gradient(-45deg, transparent 42%, #a0a0a0 42% 60%, transparent 60%) 4px 1px / 7px 8px no-repeat, linear-gradient(45deg, transparent 38%, #a0a0a0 38% 64%, transparent 64%) 1px 5px / 4px 4px no-repeat, #f4f4f4; }
.vsplit { width: 7px; flex: none; background: linear-gradient(90deg, #dfe8f2, #8e9cac 50%, #c6d2de); border-right: 1px solid #5f7896; }
.grip { width: 6px; display: flex; flex-direction: column; align-items: center; padding-top: 306px; gap: 8px; }
.grip i { border: 4px solid transparent; border-right: 4px solid #2e4d86; border-left: 0; }
.grip b { width: 2px; height: 34px; background: repeating-linear-gradient(#2e4d86 0 2px, transparent 2px 4px); }

.tree { flex: 1; min-width: 0; display: flex; flex-direction: column; background: #fff; border-right: 1px solid #8094b4; border-bottom: 1px solid #8094b4; }
.tree-view { flex: 1; min-height: 0; display: flex; }
.tree-scroll { flex: 1; min-width: 0; overflow: hidden; }
.tree table { width: 100%; }
.c-name { width: 155px; }
.c-bom { width: 55px; }
.c-who { width: 75px; }
.tree th { height: 19px; padding: 0 0 0 8px; line-height: 16px; text-align: left; white-space: nowrap; background: linear-gradient(#f4f8fd, #dfe9f7); border-right: 1px solid #aebfd8; border-bottom: 1px solid #aebfd8; }
.tree th:first-child { padding-left: 1px; }
.tree th:nth-child(2) { padding-left: 3px; }
.tree td { height: 19px; padding: 0 0 0 6px; line-height: 19px; white-space: nowrap; border-right: 1px solid #dcdfe4; }
.tree td:first-child { padding: 0; }
.tree th:last-child, .tree td:last-child { border-right: 0; }
.node { display: flex; align-items: center; height: 19px; --dot-v: repeating-linear-gradient(#555 0 1px, transparent 1px 2px); --dot-h: repeating-linear-gradient(90deg, #555 0 1px, transparent 1px 2px); }
.node.branch { padding-left: 20px; background: var(--dot-v) 24px 0 / 1px 100% no-repeat, var(--dot-h) 29px 10px / 7px 1px no-repeat; }
.node.leaf { padding-left: 54px; background: var(--dot-v) 24px 0 / 1px 100% no-repeat, var(--dot-v) 40px 0 / 1px 100% no-repeat, var(--dot-h) 40px 10px / 10px 1px no-repeat; }
.node.leaf.last { background-size: 1px 100%, 1px 10px, 10px 1px; }
.node .box { width: 9px; height: 9px; flex: none; border: 1px solid #8f9399; background: linear-gradient(#222, #222) center / 5px 1px no-repeat, #eee; margin-right: 6px; }
.node .label { flex: 1; display: flex; align-items: center; height: 19px; padding-left: 2px; }
.node .label svg { width: 16px; height: 14px; margin-right: 5px; }
.node.leaf .label { padding-left: 0; }
.node.leaf .label svg { width: 14px; height: 16px; margin-right: 6px; }
.sel td:not(:first-child), .sel .label { background: linear-gradient(#fdeeb4, #fbdc74 45%, #f8ce48 50%, #fbe494); }
.sel td { border-right-color: #e6d8a0; }
.vbar { width: 18px; flex: none; display: flex; flex-direction: column; align-items: center; background: linear-gradient(90deg, #e9e9ea, #f6f6f6); padding: 8px 0 6px; }
.vbar b { width: 17px; height: 168px; margin-top: 146px; margin-bottom: auto; border: 1px solid #9aa0a8; border-radius: 2px; background: repeating-linear-gradient(#777 0 1px, transparent 1px 3px) center / 8px 7px no-repeat, linear-gradient(90deg, #f4f4f4, #d2d6dc); }
.up { border: 4px solid transparent; border-bottom: 5px solid #555; border-top: 0; }
.down { border: 5px solid transparent; border-top: 6px solid #555; border-bottom: 0; }
.hbar { height: 17px; flex: none; display: flex; align-items: center; background: #f2f3f4; margin-right: 17px; padding: 0 6px 0 3px; }
.hbar b { width: 296px; height: 15px; margin-left: 5px; border: 1px solid #9aa0a8; border-radius: 2px; background: repeating-linear-gradient(90deg, #777 0 1px, transparent 1px 2px) center / 7px 8px no-repeat, linear-gradient(#f4f5f8, #d9dde4); }
.left { border: 5px solid transparent; border-right: 5px solid #555; border-left: 0; }
.right { border: 5px solid transparent; border-left: 5px solid #555; border-right: 0; margin-left: auto; }

.detail { flex: 1; min-width: 0; display: flex; flex-direction: column; }
.strip { height: 27px; flex: none; display: flex; align-items: center; justify-content: flex-end; padding-right: 4px; background: linear-gradient(#bccfe8, #dbe7f5); border-bottom: 1px solid #9fb3cf; }
.strip.pale { height: 23px; border: 0; background: linear-gradient(#cfdffa, #eff6fe); }
.panes { flex: 1; min-height: 0; display: flex; border-top: 4px solid #8ab0e6; border-right: 2px solid #3e66a8; border-bottom: 2px solid #7f98ba; box-shadow: inset 0 1px #fff; outline: 1px solid #41669c; outline-offset: -1px; }
.pane { display: flex; flex-direction: column; background: #efefef; }
.pane.first { width: 376px; background: #fff; border-right: 1px solid #7a96bc; }
.pane.second { width: 200px; border-right: 2px solid #7a96bc; }
.pane.third { flex: 1; min-width: 0; }
.pane-head { height: 26px; flex: none; background: linear-gradient(#f0f6fd, #d9e5f3); border-bottom: 2px solid #5d708a; }
.pane-body { flex: 1; min-height: 0; display: flex; }
.note { flex: 1; min-width: 0; line-height: 12px; white-space: pre; padding: 1px 0 0 133px; color: #111; }
.thin { width: 15px; flex: none; display: flex; flex-direction: column; justify-content: space-between; align-items: center; padding: 6px 0; background: #f3f3f3; border-left: 1px solid #e4e4e4; }
.thin i { border-bottom-color: #999; border-width: 0 3px 4px; }
.thin .down { border-bottom-color: transparent; border-top-color: #999; border-width: 4px 3px 0; }
.second .note { padding-left: 0; }

/* status bar */
.status { height: 32px; flex: none; display: flex; align-items: center; border-top: 2px solid #5f7388; border-bottom: 1px solid #5f7388; padding: 0 30px 0 7px; background: linear-gradient(#eef5fd, #d3e1f1); color: #1f3766; }
.status span { white-space: nowrap; flex: none; }
.cells { width: 22px; height: 20px; }
.s-info { margin-left: 9px; width: 58px; }
.man { width: 16px; height: 24px; }
.s-user { margin-left: 9px; width: 84px; }
.s-model { width: 534px; }
.s-version { margin-right: auto; }
.clock { width: 22px; height: 22px; margin-right: 8px; }
.status time { font: 10px/16px "Liberation Mono", monospace; }

/* task bar */
.taskbar { height: 40px; flex: none; display: flex; border-top: 1px solid #9ab0c8; background:
  linear-gradient(#ffffff30, transparent 12px),
  linear-gradient(90deg, #16202e 0, #2c3c50 6%, #5d6c7e 15%, #7a93b4 20%, #55739c 32%, #5274a2 50%, #5a7fb0 54%, #34507a 57%, #36568a 62%, #2c4468 66%, #41649a 71%, #27405f 76%, #1a2430 79%, #1d2836 82%, #3a5678 84%, #1e2833 86%, #161d26 100%); }
.start { width: 60px; display: flex; justify-content: center; padding-right: 6px; }
.start svg { width: 38px; height: 38px; }
.task { width: 58px; height: 38px; margin: 0 4px 0 0; display: flex; align-items: center; justify-content: center; border: 1px solid #202c3c; border-radius: 3px; box-shadow: inset 0 0 0 1px #ffffff66; background: linear-gradient(#ffffff66, #ffffff2a 50%, #ffffff10); }
.task svg { width: 32px; height: 32px; }
.task.active { background: linear-gradient(#ffffffc0, #dcecf890 50%, #ffffff70); }
.task.active svg { width: 30px; }
.task.stack { width: 54px; margin-right: 8px; box-shadow: inset 0 0 0 1px #ffffff66, 4px 0 0 -1px #9fb4cc, 5px 0 0 -1px #22344c; }
.tray { margin-left: auto; display: flex; color: #fff; }
.tray-icons { width: 150px; height: 24px; margin: 5px 10px 0 0; fill: none; }
.time { width: 70px; text-align: center; font: 12px/17px var(--hei); padding-top: 2px; }
.peek { width: 15px; margin-left: 3px; border: 1px solid #5e6b78; background: linear-gradient(#8a949e, #2a323a 50%, #0e1216); }

/* result window */
.dialog { position: absolute; left: 898px; top: 254px; width: 739px; height: 606px; z-index: 5; border: 1px solid #1c2c3c; border-radius: 7px; padding: 0 6px 6px; display: flex; flex-direction: column; background: linear-gradient(100deg, #cfe5fb, #b7d9fb 30%, #a8cbf0 60%, #c0defc 64%, #d6e8fc); box-shadow: inset 0 0 0 1px #e6f6ff, 0 2px 14px 2px #000000a8; }
.dlg-bar { height: 28px; flex: none; display: flex; justify-content: space-between; align-items: flex-start; }
.dlg-logo { width: 16px; height: 17px; margin: 6px 0 0; }
.dlg-ctl { display: flex; width: 103px; height: 19px; border: 1px solid #4f6070; border-top: 0; border-radius: 0 0 5px 5px; overflow: hidden; }
.dlg-ctl button { flex: 27; display: flex; align-items: center; justify-content: center; border-right: 1px solid #5f7080; background: linear-gradient(#d6e4f2, #a8bacd 50%, #c4d6e8); }
.dlg-ctl .x { flex: 46; border: 0; background: linear-gradient(#e8a89c, #c8402c 50%, #d86c54); }
.dlg-ctl svg { width: 15px; height: 13px; }
.dlg-client { flex: 1; min-height: 0; display: flex; flex-direction: column; background: #f0f0f0; border: 1px solid #5c7088; }
.dlg-head { height: 58px; flex: none; padding-top: 4px; }
.dlg-head h2 { height: 30px; padding-left: 5px; font: bold 22px/30px var(--song); color: #b22222; white-space: nowrap; -webkit-box-reflect: below 0 linear-gradient(transparent 45%, #00000060 90%); }
.dlg-head .code { font-size: 20px; }
.dlg-list { flex: 1; background: #fff; border: 1px solid #8094b4; border-left-width: 0; border-top-width: 1px; }
.dlg-list li { height: 21px; display: flex; align-items: center; padding-left: 5px; font-size: 16px; line-height: 19px; white-space: nowrap; }
.dlg-list svg { width: 15px; height: 15px; margin-right: 13px; }
.dlg-list .fatal { color: #c01818; }
.dlg-foot { height: 54px; flex: none; display: flex; align-items: center; padding: 2px 22px 0 16px; color: #25396f; }
.dlg-foot button { display: flex; align-items: center; gap: 13px; }
.dlg-foot .push { margin-left: auto; margin-right: 30px; }
.f-page { width: 34px; height: 40px; color: #000; }
.f-copy { width: 40px; height: 40px; color: #000; }
.f-ok { width: 34px; height: 34px; }
.arrows { position: absolute; left: 0; top: 0; z-index: 6; pointer-events: none; }
```
FILE: app.js
```js
// Process tree: each branch with its steps
const tree = [
  [null, ['X-Ray冲孔', '铣边', '打字嘜']],
  ['棕化1', ['棕化1']],
  ['激光钻孔', ['激光钻孔']],
  ['沉铜', ['等离子处理']],
  ['棕化2', ['化学清洗2']],
  ['AOI1', ['盲孔检查1']],
  ['层压2', ['X-Ray冲孔2']],
  ['钻孔2', ['树脂钻孔2']],
  ['沉铜1', ['去毛刺1', '沉铜1']],
  ['电镀', ['板镀', '电镀填孔']],
  ['外层干膜1', ['外层前处理1', '贴膜1', '曝光1', '显影1']],
  ['图形电镀1', ['镀孔1']],
  ['外层蚀刻1', ['退膜1']],
  ['树脂塞孔', ['阻焊前处理']]
];
const rest = '<td>P2</td><td>肖吉美</td><td>肖吉美</td><td>已审核</td><td></td>';
let html = '';
tree.forEach(([name, steps], g) => {
  if (name) {
    html += `<tr${g === 1 ? ' class="sel"' : ''}><td><div class="node branch"><i class="box"></i><span class="label"><svg><use href="#treefolder"/></svg>${name}</span></div></td>${rest}</tr>`;
  }
  steps.forEach((step, i) => {
    const last = i === steps.length - 1 && g !== tree.length - 1;
    html += `<tr><td><div class="node leaf${last ? ' last' : ''}"><span class="label"><svg><use href="#page"/></svg>${step}</span></div></td>${rest}</tr>`;
  });
});
document.getElementById('rows').innerHTML = html;
```
